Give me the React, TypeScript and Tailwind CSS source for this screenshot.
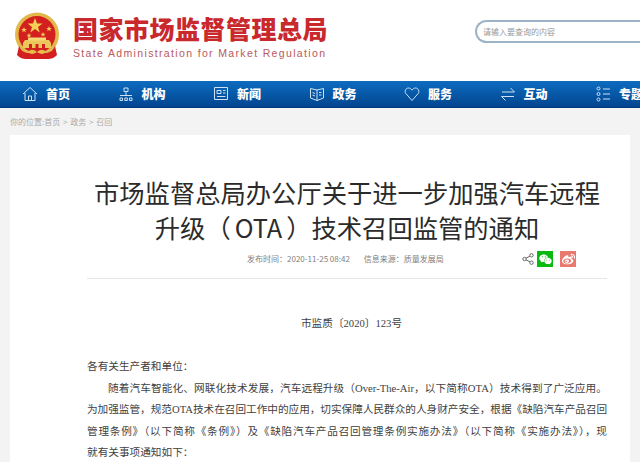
import type { ReactNode } from 'react'
import { FaWeibo, FaWeixin } from 'react-icons/fa'

const NAV_ICON = 'w-4 h-4 shrink-0'

const NAV: { label: string; icon: ReactNode }[] = [
  {
    label: '首页',
    icon: (
      <svg className={NAV_ICON} viewBox="0 0 16 16" fill="none" stroke="#cfe2f5" strokeWidth="1">
        <path d="M1 8l7-6.500L15 8M3 7v7.500h10V7M6.500 14.500V10h3v4.500" />
      </svg>
    ),
  },
  {
    label: '机构',
    icon: (
      <svg className={NAV_ICON} viewBox="0 0 16 16" fill="none" stroke="#cfe2f5" strokeWidth="1">
        <path d="M6 2h4v3.500H6zM2 9.500h12M8 5.500v4" />
        <path d="M2 12h2.500v2.500H2zM6.800 12h2.500v2.500H6.800zM11.500 12H14v2.500h-2.500z" />
      </svg>
    ),
  },
  {
    label: '新闻',
    icon: (
      <svg className={NAV_ICON} viewBox="0 0 16 16" fill="none" stroke="#cfe2f5" strokeWidth="1">
        <path d="M1.500 1.500h13v12h-13zM4 4.500h4v3H4zM10 4.500h2.500M10 7h2.500M4 10.500h8.500" />
      </svg>
    ),
  },
  {
    label: '政务',
    icon: (
      <svg className={NAV_ICON} viewBox="0 0 16 16" fill="none" stroke="#cfe2f5" strokeWidth="1">
        <path d="M1.500 2.500L8 4l6.500-1.500v9.500L8 14.500 1.500 12zM8 4v10.500M10 6.500h2.500M10 9h2.500M3.500 6.500L6 7.500M3.500 9L6 10" />
      </svg>
    ),
  },
  {
    label: '服务',
    icon: (
      <svg className={NAV_ICON} viewBox="0 0 16 16" fill="none" stroke="#cfe2f5" strokeWidth="1">
        <path d="M8 14.500L1.800 7.500C.3 5.500 1.500 2 4.500 2 6 2 7.300 3 8 4.200 8.700 3 10 2 11.500 2c3 0 4.200 3.500 2.700 5.500z" />
      </svg>
    ),
  },
  {
    label: '互动',
    icon: (
      <svg className={NAV_ICON} viewBox="0 0 16 16" fill="none" stroke="#cfe2f5" strokeWidth="1">
        <path d="M2 6h12.500L10.500 2M14 10.500H1.500l4 4" />
      </svg>
    ),
  },
  {
    label: '专题',
    icon: (
      <svg className={NAV_ICON} viewBox="0 0 16 16" fill="none" stroke="#cfe2f5" strokeWidth="1">
        <circle cx="3.500" cy="2.500" r="1.500" />
        <circle cx="3.500" cy="8" r="1.500" />
        <circle cx="3.500" cy="13.500" r="1.500" />
        <path d="M8 3h7M8 8h7M8 13h7" />
      </svg>
    ),
  },
]

function Emblem() {
  return (
    <svg className="w-[46px] h-[48px] shrink-0" viewBox="0 0 46 48">
      <circle cx="23" cy="22.500" r="22" fill="#e2b84a" />
      <circle cx="23" cy="22.500" r="18.500" fill="#d3201f" />
      <path d="M21 6l2 5.500h5.500l-4.500 3.500 1.700 5.500-4.700-3.400-4.700 3.400 1.700-5.500-4.500-3.500h5.500z" fill="#f3cf55" />
      <path d="M10 15l.8 2h2l-1.600 1.300.6 2-1.800-1.200-1.800 1.200.6-2L7.200 17h2zM15 21l.7 1.800h1.800l-1.400 1 .5 1.800-1.600-1-1.600 1 .5-1.800-1.400-1h1.800zM29 20l.7 1.800h1.800l-1.400 1 .5 1.800-1.600-1-1.600 1 .5-1.800-1.400-1h1.800zM35 14l.8 2h2l-1.600 1.300.6 2-1.800-1.200-1.800 1.200.6-2-1.600-1.300h2z" fill="#f3cf55" />
      <path d="M11 28h24l2 3v5H9v-5z" fill="#ecc65a" />
      <path d="M14 25.500h18v3H14z" fill="#f3d873" />
      <path d="M15 32h3v4h-3zM21.500 32h3v4h-3zM28 32h3v4h-3z" fill="#d3201f" />
      <path d="M5 34c2 4 4 6 8 7h20c4-1 6-3 8-7l2 9c-3 3-6 4-9 4H12c-3 0-6-1-9-4z" fill="#d3201f" />
      <path d="M14 40c3-3 5-3 9 0 4-3 6-3 9 0-3 3-6 2-9 0-3 2-6 3-9 0z" fill="#e8bd4c" />
    </svg>
  )
}

export default function App() {
  return (
    <div className="w-[640px] h-[462px] overflow-hidden bg-[#f3f3f3] font-['Noto_Sans_CJK_SC',sans-serif]">
      <header className="h-[81px] bg-white flex pl-[14px] pt-[12px]">
        <Emblem />
        <div className="ml-[13px] pt-[1px]">
          <div className="text-[25px] leading-[30px] font-black tracking-[0.5px] text-[#c9282d] whitespace-nowrap">
            国家市场监督管理总局
          </div>
          <div className="mt-[3px] text-[10.500px] leading-[14px] tracking-[1.35px] text-[#b9585c] whitespace-nowrap font-['Liberation_Sans',sans-serif]">
            State Administration for Market Regulation
          </div>
        </div>
        <div className="ml-auto mt-[8px] w-[165px] h-[23px] border-2 border-r-0 border-[#9db4c8] rounded-l-full pl-[6px] text-[8px] leading-[19px] text-[#999] whitespace-nowrap">
          请输入要查询的内容
        </div>
      </header>

      <nav className="h-[27px] flex pl-[22px] bg-gradient-to-b from-[#0d6cc0] to-[#03458f] border-b border-[#02387a]">
        {NAV.map(item => (
          <div key={item.label} className="w-[95.500px] shrink-0 flex items-center gap-[8px]">
            {item.icon}
            <span className="text-[12px] font-black text-white whitespace-nowrap">{item.label}</span>
          </div>
        ))}
      </nav>

      <div className="h-[27px] pl-[10px] text-[8px] leading-[27px] text-[#aaa] [word-spacing:1px]">你的位置:首页 &gt; 政务 &gt; 召回</div>

      <main className="mx-[10px] h-[400px] bg-white pl-[77px] pr-[23px] pt-[40px]">
        <h1 className="text-[25.300px] leading-[35px] text-center text-[#2b2b2b] whitespace-nowrap">
          市场监督总局办公厅关于进一步加强汽车远程
          <br />
          升级（<span className="px-[4px]">OTA</span>）技术召回监管的通知
        </h1>

        <div className="mt-[6px] h-[28px] border-b border-[#e6e6e6] flex items-center text-[8px] text-[#808080] pb-[11px] whitespace-nowrap">
          <span className="ml-[160px]">发布时间：2020-11-25 08:42</span>
          <span className="ml-[14px]">信息来源：质量发展局</span>
          <svg className="ml-auto w-[12px] h-[12px]" viewBox="0 0 12 12" fill="none" stroke="#666" strokeWidth="1">
            <circle cx="2.500" cy="6" r="1.700" />
            <circle cx="9.500" cy="2.300" r="1.700" />
            <circle cx="9.500" cy="9.700" r="1.700" />
            <path d="M4 5.200L8 3.100M4 6.800L8 8.900" />
          </svg>
          <span className="ml-[3px] w-[16px] h-[16px] bg-[#09b90f] flex items-center justify-center">
            <FaWeixin className="w-[13px] h-[13px] text-white" />
          </span>
          <span className="ml-[7px] mr-[31px] w-[16px] h-[16px] bg-[#e9796e] flex items-center justify-center">
            <FaWeibo className="w-[13px] h-[13px] text-white" />
          </span>
        </div>

        <div className="mt-[34px] text-[10.650px] leading-[21.400px] text-[#3f3f3f] font-['Liberation_Serif','Noto_Sans_CJK_SC',serif]">
          <p className="text-center pl-[9px]">市监质〔2020〕123号</p>
          <p className="mt-[22px]">各有关生产者和单位：</p>
          {/* one block per line, the breaks have to land where the source has them */}
          <p className="pl-[21px] [text-align-last:justify] whitespace-nowrap">
            随着汽车智能化、网联化技术发展，汽车远程升级（Over-The-Air，以下简称OTA）技术得到了广泛应用。
          </p>
          <p className="[text-align-last:justify] whitespace-nowrap tracking-[-0.02px]">
            为加强监管，规范OTA技术在召回工作中的应用，切实保障人民群众的人身财产安全，根据《缺陷汽车产品召回
          </p>
          <p className="[text-align-last:justify] whitespace-nowrap">
            管理条例》（以下简称《条例》）及《缺陷汽车产品召回管理条例实施办法》（以下简称《实施办法》），现
          </p>
          <p>就有关事项通知如下：</p>
        </div>
      </main>
    </div>
  )
}
